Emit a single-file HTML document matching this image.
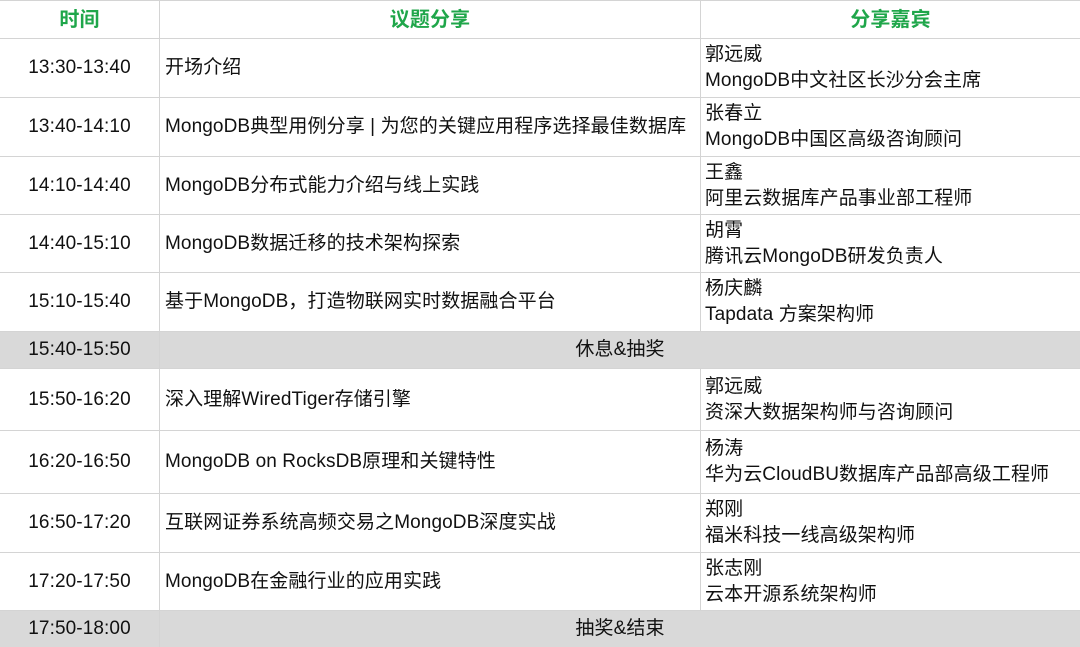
<!DOCTYPE html>
<html><head><meta charset="utf-8"><style>
html,body{margin:0;padding:0;background:#fff;}
body{width:1080px;height:647px;position:relative;overflow:hidden;font-family:"Liberation Sans","Noto Sans CJK SC",sans-serif;color:#111;font-size:19px;letter-spacing:0.1px;}
.r{position:absolute;left:0;width:1080px;border-top:1px solid #d4d4d4;box-sizing:border-box;}
.c{position:absolute;top:0;bottom:0;display:flex;align-items:center;box-sizing:border-box;white-space:nowrap;line-height:26px;}
.c>span,.m>span{display:block;line-height:26px;}
.t{left:0;width:160px;justify-content:center;border-right:1px solid #d4d4d4;}
.p{left:160px;width:541px;padding-left:5px;border-right:1px solid #d4d4d4;}
.g{left:701px;width:379px;padding-left:4px;flex-direction:column;align-items:flex-start;justify-content:center;}
.h .c{color:#1fa64a;font-weight:bold;font-size:20px;justify-content:center;align-items:center;flex-direction:row;padding:0;line-height:36px;}
.gray{background:#d9d9d9;}
.gray .m{position:absolute;left:160px;width:920px;top:0;bottom:0;display:flex;align-items:center;justify-content:center;line-height:26px;}
</style></head><body>
<div class="r h" style="top:0;height:38px;"><div class="c t"><span style="line-height:36px">时间</span></div><div class="c p"><span style="line-height:36px">议题分享</span></div><div class="c g"><span style="line-height:36px">分享嘉宾</span></div></div>
<div class="r" style="top:38px;height:59px;"><div class="c t"><span>13:30-13:40</span></div><div class="c p"><span>开场介绍</span></div><div class="c g"><div>郭远威</div><div>MongoDB中文社区长沙分会主席</div></div></div>
<div class="r" style="top:97px;height:59px;"><div class="c t"><span>13:40-14:10</span></div><div class="c p"><span>MongoDB典型用例分享 | 为您的关键应用程序选择最佳数据库</span></div><div class="c g"><div>张春立</div><div>MongoDB中国区高级咨询顾问</div></div></div>
<div class="r" style="top:156px;height:58px;"><div class="c t"><span>14:10-14:40</span></div><div class="c p"><span>MongoDB分布式能力介绍与线上实践</span></div><div class="c g"><div>王鑫</div><div>阿里云数据库产品事业部工程师</div></div></div>
<div class="r" style="top:214px;height:58px;"><div class="c t"><span>14:40-15:10</span></div><div class="c p"><span>MongoDB数据迁移的技术架构探索</span></div><div class="c g"><div>胡霄</div><div>腾讯云MongoDB研发负责人</div></div></div>
<div class="r" style="top:272px;height:59px;"><div class="c t"><span>15:10-15:40</span></div><div class="c p"><span>基于MongoDB，打造物联网实时数据融合平台</span></div><div class="c g"><div>杨庆麟</div><div>Tapdata 方案架构师</div></div></div>
<div class="r gray" style="top:331px;height:37px;"><div class="c t"><span>15:40-15:50</span></div><div class="m"><span>休息&amp;抽奖</span></div></div>
<div class="r" style="top:368px;height:62px;"><div class="c t"><span>15:50-16:20</span></div><div class="c p"><span>深入理解WiredTiger存储引擎</span></div><div class="c g"><div>郭远威</div><div>资深大数据架构师与咨询顾问</div></div></div>
<div class="r" style="top:430px;height:63px;"><div class="c t"><span>16:20-16:50</span></div><div class="c p"><span>MongoDB on RocksDB原理和关键特性</span></div><div class="c g"><div>杨涛</div><div>华为云CloudBU数据库产品部高级工程师</div></div></div>
<div class="r" style="top:493px;height:59px;"><div class="c t"><span>16:50-17:20</span></div><div class="c p"><span>互联网证券系统高频交易之MongoDB深度实战</span></div><div class="c g"><div>郑刚</div><div>福米科技一线高级架构师</div></div></div>
<div class="r" style="top:552px;height:58px;"><div class="c t"><span>17:20-17:50</span></div><div class="c p"><span>MongoDB在金融行业的应用实践</span></div><div class="c g"><div>张志刚</div><div>云本开源系统架构师</div></div></div>
<div class="r gray" style="top:610px;height:37px;"><div class="c t"><span>17:50-18:00</span></div><div class="m"><span>抽奖&amp;结束</span></div></div>
</body></html>
